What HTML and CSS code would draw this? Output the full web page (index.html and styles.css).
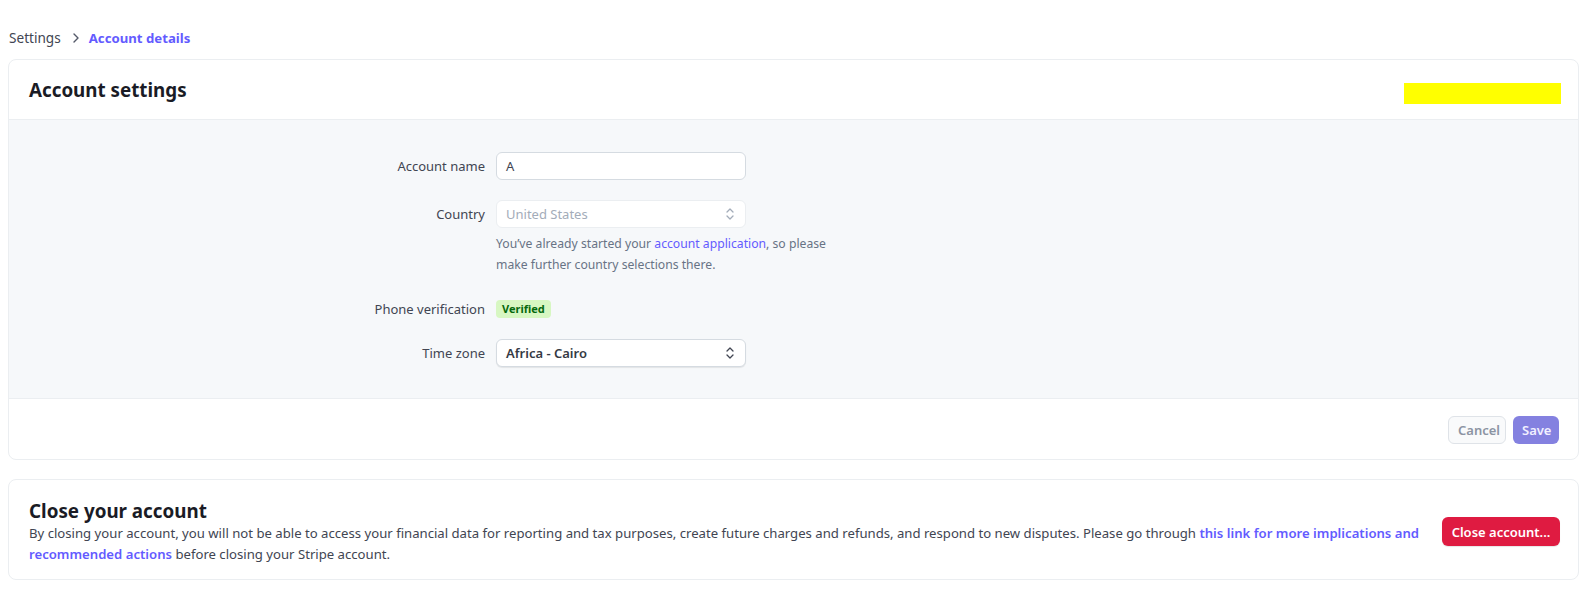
FILE: index.html
```html
<!DOCTYPE html>
<html lang="en">
<head>
<meta charset="utf-8">
<title>Account details</title>
<link rel="stylesheet" href="styles.css">
</head>
<body>
<div class="page">
  <nav class="crumbs">
    <span class="crumb">Settings</span>
    <svg class="crumb-sep" width="12" height="12" viewBox="0 0 12 12"><path d="M4 2l4 4-4 4" fill="none" stroke="#545969" stroke-width="1.4" stroke-linecap="round" stroke-linejoin="round"/></svg>
    <span class="crumb current">Account details</span>
  </nav>

  <section class="card">
    <header class="card-head">
      <h1 class="title">Account settings</h1>
      <div class="highlight"></div>
    </header>
    <div class="card-body">
      <div class="form">
        <div class="row">
          <label class="label">Account name</label>
          <div class="field"><div class="input">A</div></div>
        </div>
        <div class="row">
          <label class="label">Country</label>
          <div class="field">
            <div class="input select disabled">United States
              <svg class="chev" width="10" height="14" viewBox="0 0 10 14"><path d="M2 5l3-3 3 3M2 9l3 3 3-3" fill="none" stroke="#a3acb9" stroke-width="1.3" stroke-linecap="round" stroke-linejoin="round"/></svg>
            </div>
            <p class="help">You’ve already started your <a class="link">account application</a>, so please make further country selections there.</p>
          </div>
        </div>
        <div class="row row-badge">
          <label class="label">Phone verification</label>
          <div class="field"><span class="badge">Verified</span></div>
        </div>
        <div class="row">
          <label class="label">Time zone</label>
          <div class="field">
            <div class="input select strong">Africa - Cairo
              <svg class="chev" width="10" height="14" viewBox="0 0 10 14"><path d="M2 5l3-3 3 3M2 9l3 3 3-3" fill="none" stroke="#414552" stroke-width="1.3" stroke-linecap="round" stroke-linejoin="round"/></svg>
            </div>
          </div>
        </div>
      </div>
    </div>
    <footer class="card-foot">
      <button class="btn btn-cancel">Cancel</button>
      <button class="btn btn-save">Save</button>
    </footer>
  </section>

  <section class="card close-card">
    <div class="close-text">
      <h2 class="title">Close your account</h2>
      <p class="desc">By closing your account, you will not be able to access your financial data for reporting and tax purposes, create future charges and refunds, and respond to new disputes. Please go through <a class="link strong-link">this link for more implications and recommended actions</a> before closing your Stripe account.</p>
    </div>
    <button class="btn btn-danger">Close account...</button>
  </section>
</div>
</body>
</html>
```

FILE: styles.css
```css
* { box-sizing: border-box; }
html, body { margin: 0; padding: 0; background: #fff; }
body {
  font-family: "Noto Sans", "Open Sans", sans-serif;
  font-size: 14px;
  color: #414552;
}
.page { padding: 28px 14px 0 8px; }

.crumbs { display: flex; align-items: center; height: 20px; margin: 0 0 11px 1px; gap: 7px; }
.crumb { font-size: 13.6px; color: #414552; line-height: 20px; }
.crumb.current { color: #635bff; font-weight: 700; font-size: 13.2px; margin-left: -2px; }
.crumb-sep { margin: 0 2px; }

.card { border: 1px solid #ebeef1; border-radius: 8px; background: #fff; }
.card-head { height: 59px; display: flex; align-items: center; justify-content: space-between; padding: 0 17px 0 20px; }
.title { margin: 0; font-size: 18.8px; font-weight: 700; color: #1a1b25; line-height: 24px; }
.highlight { width: 157px; height: 21px; background: #ffff00; margin-top: 7px; }

.card-body { background: #f6f8fa; border-top: 1px solid #ebeef1; border-bottom: 1px solid #ebeef1; padding: 32px 0 31px; }
.form { display: flex; flex-direction: column; gap: 20px; }
.row { display: grid; grid-template-columns: 476px 250px; column-gap: 11px; align-items: start; }
.label { text-align: right; font-size: 13px; line-height: 28px; color: #414552; }
.row-badge .label { line-height: 20px; }
.row-badge { margin-top: 4px; }
.field { display: flex; flex-direction: column; align-items: flex-start; }
.input {
  width: 250px; height: 28px; border: 1px solid #d5dbe1; border-radius: 6px; background: #fff;
  padding: 0 9px; display: flex; align-items: center; font-size: 13px; color: #414552; position: relative;
}
.select { box-shadow: 0 1px 1px rgba(0,0,0,0.08); }
.input.disabled { color: #a3acb9; border-color: #ebeef1; box-shadow: none; }
.input.strong { font-weight: 600; color: #353a44; border-color: #d5dbe1; }
.chev { position: absolute; right: 10px; top: 6px; }
.help { margin: 6px 0 0; font-size: 12.2px; line-height: 20.5px; color: #687385; width: 340px; }
.link { color: #635bff; text-decoration: none; }
.strong-link { font-weight: 600; }
.badge { display: inline-block; height: 18px; line-height: 18px; padding: 0 6px; border-radius: 4px; background: #d7f7c2; color: #05690d; font-size: 11px; font-weight: 700; margin-top: 1px; }

.card-foot { display: flex; justify-content: flex-end; gap: 7px; padding: 17px 19px 15px; }
.btn { font-family: inherit; height: 28px; border-radius: 6px; font-size: 13px; font-weight: 600; padding: 0 9px; cursor: pointer; }
.btn-cancel { width: 58px; background: #f9fafb; border: 1px solid #dfe3e8; color: #8c94a3; }
.btn-save { width: 46px; background: #8481e0; border: none; color: #f1f0ff; }

.close-card { margin-top: 19px; display: flex; align-items: center; gap: 20px; padding: 19px 18px 15px 20px; }
.close-text { flex: 1; }
.desc { margin: 0; font-size: 13.15px; line-height: 20.5px; color: #414552; }
.btn-danger { flex: none; width: 118px; height: 29px; background: #df1b41; border: none; color: #fff; box-shadow: 0 1px 1px rgba(0,0,0,0.1); }
```
